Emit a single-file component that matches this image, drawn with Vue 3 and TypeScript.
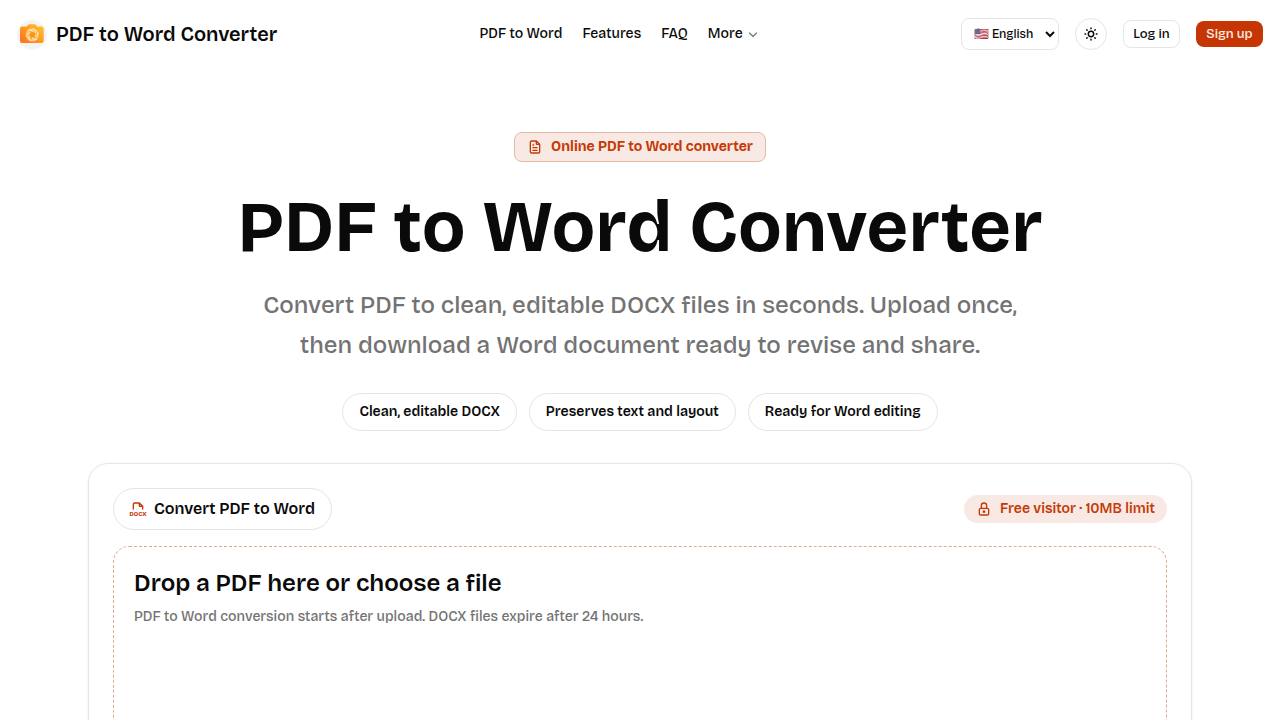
<script setup lang="ts">
import { ref } from 'vue'

interface NavLink {
  label: string
  href: string
}

const links: NavLink[] = [
  { label: 'PDF to Word', href: '#convert' },
  { label: 'Features', href: '#features' },
  { label: 'FAQ', href: '#faq' },
]
const benefits: string[] = ['Clean, editable DOCX', 'Preserves text and layout', 'Ready for Word editing']
const language = ref<string>('en')
</script>

<template>
  <div class="page">
    <header class="header">
      <a class="brand" href="#">
        <svg class="logo" viewBox="0 0 32 32" aria-hidden="true">
          <defs>
            <linearGradient id="camera" x1="0" y1="1" x2="1" y2="0">
              <stop offset="0" stop-color="#ff6d1f" />
              <stop offset="0.5" stop-color="#ff9a1c" />
              <stop offset="1" stop-color="#ffc92e" />
            </linearGradient>
          </defs>
          <circle cx="16" cy="17" r="15" fill="#f4f4f6" />
          <path d="M6.400 8.500h4.300l1.300-1.600q.4-.6 1.200-.6h5.600q.8 0 1.200.6l1.300 1.600h4q2.400 0 2.400 2.400v11.800q0 2.400-2.400 2.400H6.400Q4 25.100 4 22.700V10.900q0-2.400 2.400-2.400z" fill="url(#camera)" />
          <circle cx="16.300" cy="16.800" r="6" fill="#ffb04c" stroke="#ffd08a" stroke-width="1.200" />
          <circle cx="16.300" cy="16.800" r="2.800" fill="#ff9412" />
          <path d="M16.500 11q3.200.8 2.700 4.200M21.700 14.200q.6 3.200-2.500 4.400M21 20.700q-2.800 1.800-5-.9M15 22.400q-2.900-1.500-1.700-4.600M11 18.800q-.2-3.400 3.200-4.200M12.300 12.900q2.300-1.900 4.700.8" stroke="#ffe6bd" stroke-width="1.200" fill="none" />
        </svg>
        <span>PDF to Word Converter</span>
      </a>

      <nav class="nav" aria-label="Main">
        <a v-for="link in links" :key="link.label" :href="link.href">{{ link.label }}</a>
        <button type="button" class="more">
          More
          <svg viewBox="0 0 24 24" width="12" height="12" aria-hidden="true"><path d="M5 10l7 7 7-7" fill="none" stroke="#777" stroke-width="2.400" stroke-linecap="round" stroke-linejoin="round" /></svg>
        </button>
      </nav>

      <div class="actions">
        <select v-model="language" class="language" aria-label="Language">
          <option value="en">🇺🇸 English</option>
        </select>
        <button type="button" class="theme" aria-label="Toggle theme">
          <svg viewBox="0 0 24 24" width="16" height="16" fill="none" stroke="currentColor" stroke-width="2.200" stroke-linecap="round" aria-hidden="true">
            <circle cx="12" cy="12" r="4" />
            <path d="M12 3v1M12 20v1M5.600 5.600l.7.7M17.700 17.700l.7.7M3 12h1M20 12h1M6.300 17.700l-.7.7M18.400 5.600l-.7.7" />
          </svg>
        </button>
        <button type="button" class="login">Log in</button>
        <button type="button" class="signup">Sign up</button>
      </div>
    </header>

    <main class="main">
      <section class="hero">
        <p class="badge">
          <svg viewBox="0 0 24 24" width="16" height="16" fill="none" stroke="currentColor" stroke-width="2" stroke-linecap="round" stroke-linejoin="round" aria-hidden="true">
            <path d="M14 3v4a1 1 0 0 0 1 1h4M17 21H7a2 2 0 0 1-2-2V5a2 2 0 0 1 2-2h7l5 5v11a2 2 0 0 1-2 2zM9 9h1M9 13h6M9 17h6" />
          </svg>
          Online PDF to Word converter
        </p>
        <h1>PDF to Word Converter</h1>
        <p class="lead">Convert PDF to clean, editable DOCX files in seconds. Upload once, then download a Word document ready to revise and share.</p>
        <ul class="benefits">
          <li v-for="benefit in benefits" :key="benefit">{{ benefit }}</li>
        </ul>
      </section>

      <section id="convert" class="card">
        <div class="card-head">
          <span class="tool">
            <svg viewBox="0 0 24 24" width="16" height="16" fill="none" stroke="currentColor" stroke-width="2" stroke-linecap="round" stroke-linejoin="round" aria-hidden="true">
              <path d="M14 3v4a1 1 0 0 0 1 1h4M5 12V5a2 2 0 0 1 2-2h7l5 5v4" />
              <text class="file-type" x="12" y="22" text-anchor="middle">DOCX</text>
            </svg>
            Convert PDF to Word
          </span>
          <span class="limit">
            <svg viewBox="0 0 24 24" width="16" height="16" fill="none" stroke="currentColor" stroke-width="2" stroke-linecap="round" stroke-linejoin="round" aria-hidden="true">
              <rect x="5" y="11" width="14" height="10" rx="2" />
              <circle cx="12" cy="16" r="1" />
              <path d="M8 11V7a4 4 0 0 1 8 0v4" />
            </svg>
            Free visitor · 10MB limit
          </span>
        </div>
        <div class="dropzone">
          <h2>Drop a PDF here or choose a file</h2>
          <p>PDF to Word conversion starts after upload. DOCX files expire after 24 hours.</p>
        </div>
      </section>
    </main>
  </div>
</template>

<style>
body {
  margin: 0;
  background: #fff;
}
</style>

<style scoped>
.page {
  color: #0a0a0a;
  font-family: "Bricolage Grotesque", Inter, "Liberation Sans", sans-serif;
  font-size: 14px;
  font-weight: 500;
  line-height: 20px;
}
.page * {
  box-sizing: border-box;
}
a {
  color: inherit;
  text-decoration: none;
}
button,
select {
  font: inherit;
  color: inherit;
  margin: 0;
  cursor: pointer;
}
svg {
  flex: none;
}
h1,
h2,
p {
  margin: 0;
}
.header {
  display: flex;
  align-items: center;
  justify-content: space-between;
  height: 68px;
  padding: 0 17px 0 16px;
}
.brand {
  display: flex;
  align-items: center;
  gap: 8px;
  font-size: 20px;
  font-weight: 600;
  line-height: 28px;
}
.logo {
  width: 32px;
  height: 32px;
}
.nav {
  display: flex;
  align-items: center;
  gap: 20px;
}
.more {
  display: flex;
  align-items: center;
  gap: 4px;
  padding: 0;
  border: 0;
  background: none;
}
.actions {
  display: flex;
  align-items: center;
  gap: 16px;
  font-size: 13px;
}
.language {
  width: 98px;
  height: 32px;
  padding: 0 0 0 8px;
  border: 1px solid #e5e5e5;
  border-radius: 8px;
  background: #fff;
  font-size: 12px;
}
.theme,
.login,
.signup {
  display: flex;
  align-items: center;
  justify-content: center;
  border: 1px solid #e5e5e5;
  background: #fff;
}
.theme {
  width: 32px;
  height: 32px;
  padding: 0;
  border-radius: 50%;
}
.login {
  height: 28px;
  min-width: 57px;
  padding: 0 8px;
  border-radius: 8px;
}
.signup {
  height: 26px;
  min-width: 67px;
  padding: 0 8px;
  border: 0;
  border-radius: 8px;
  background: #c63604;
  color: #fff0e8;
}
.main {
  max-width: 1104px;
  margin: 0 auto;
  padding: 64px 24px;
}
@media (min-width: 1152px) {
  .main {
    padding: 64px 0;
  }
}
.hero {
  display: flex;
  flex-direction: column;
  align-items: center;
  text-align: center;
}
.badge {
  display: flex;
  align-items: center;
  gap: 8px;
  height: 30px;
  padding: 0 12px;
  border: 1px solid #e8b8a5;
  border-radius: 8px;
  background: #f9e9e4;
  color: #c43a06;
  font-weight: 700;
}
.hero h1 {
  margin-top: 29px;
  font-size: 72px;
  font-weight: 700;
  line-height: 72px;
}
.lead {
  max-width: 768px;
  margin-top: 22px;
  color: #737373;
  font-size: 24px;
  line-height: 40px;
}
.benefits {
  display: flex;
  flex-wrap: wrap;
  justify-content: center;
  gap: 12px;
  margin: 28px 0 0;
  padding: 0;
  list-style: none;
  font-weight: 600;
}
.benefits li {
  padding: 8px 16px;
  border: 1px solid #e5e5e5;
  border-radius: 19px;
}
.card {
  margin-top: 32px;
  padding: 24px;
  border: 1px solid #e5e5e5;
  border-radius: 20px;
  box-shadow: 0 1px 3px rgba(0, 0, 0, 0.08);
}
.card-head {
  display: flex;
  align-items: center;
  justify-content: space-between;
  gap: 16px;
}
.tool {
  display: flex;
  align-items: center;
  gap: 8px;
  height: 42px;
  padding: 0 16px;
  border: 1px solid #e5e5e5;
  border-radius: 21px;
  font-size: 16px;
  font-weight: 600;
}
.tool svg {
  overflow: visible;
  color: #c63604;
}
.file-type {
  fill: currentColor;
  stroke: none;
  font-size: 9px;
  font-weight: 800;
}
.limit {
  display: flex;
  align-items: center;
  gap: 8px;
  height: 28px;
  padding: 0 12px;
  border-radius: 14px;
  background: #f9e9e4;
  color: #c43a06;
  font-weight: 600;
}
.dropzone {
  min-height: 320px;
  margin-top: 16px;
  padding: 20px;
  border: 1px dashed #e0a898;
  border-radius: 16px;
}
.dropzone h2 {
  font-size: 24px;
  font-weight: 600;
  line-height: 32px;
}
.dropzone p {
  margin-top: 8px;
  color: #737373;
}
</style>
